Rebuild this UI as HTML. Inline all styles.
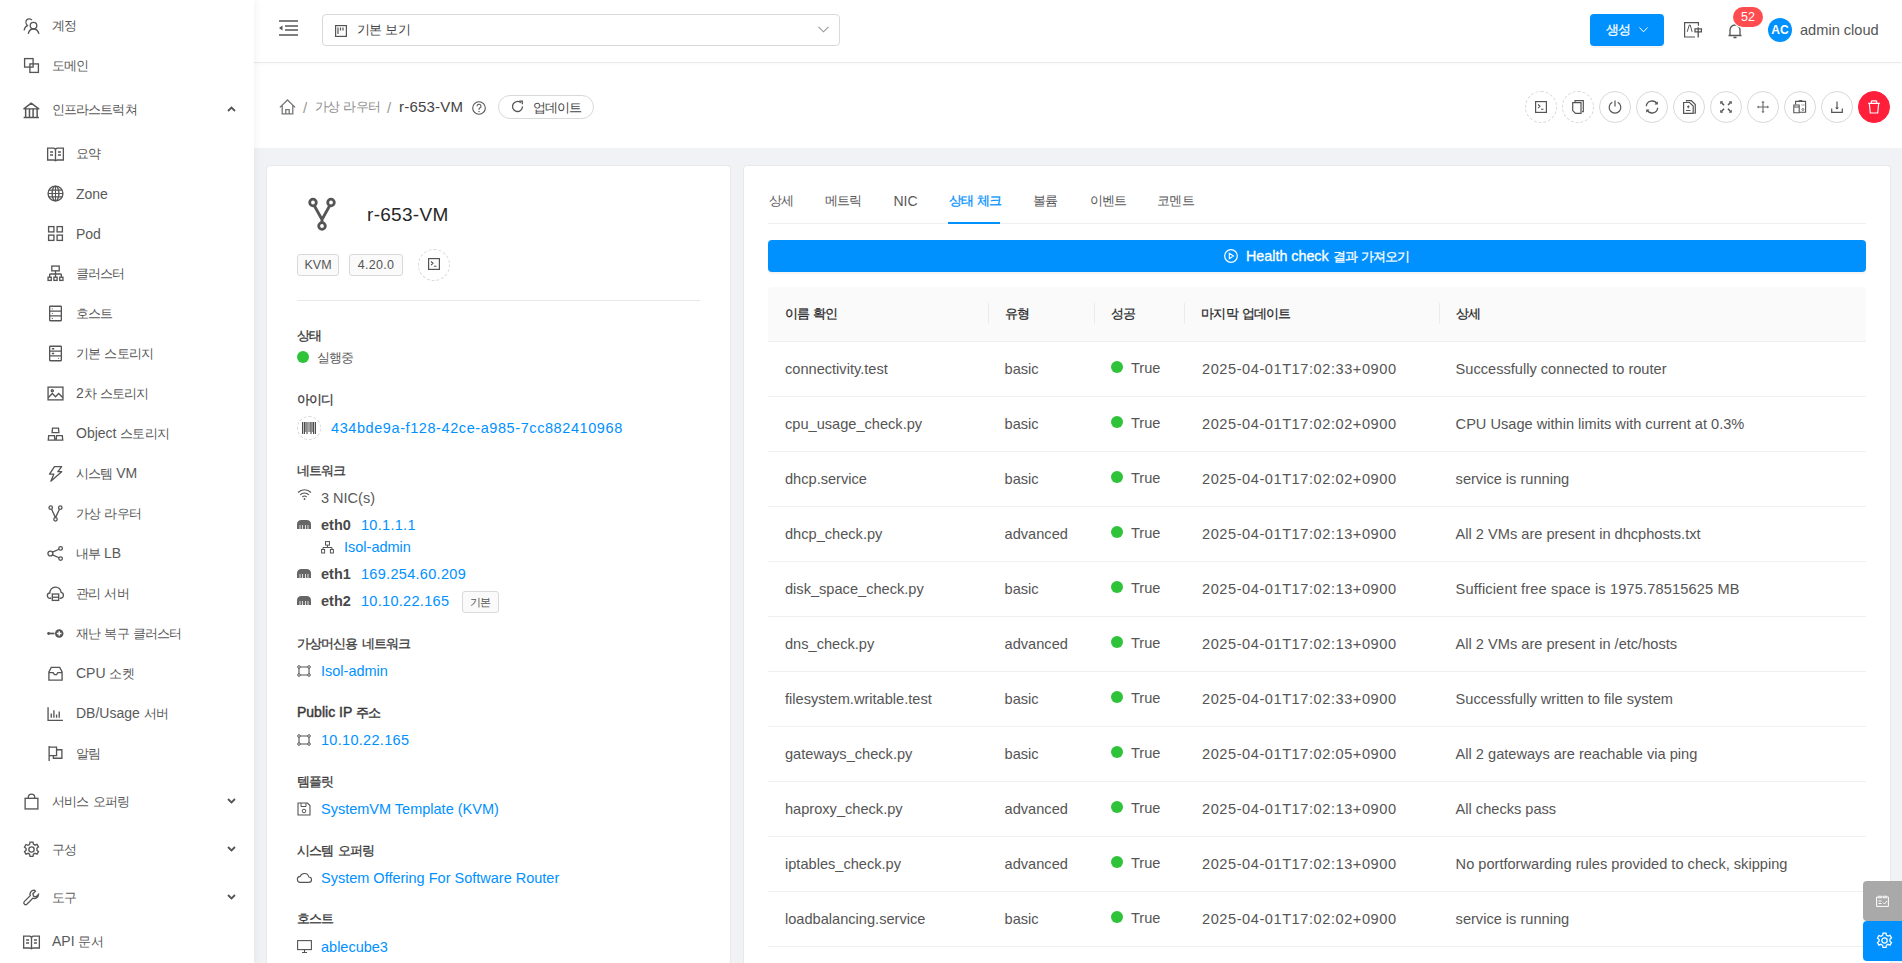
<!DOCTYPE html>
<html><head><meta charset="utf-8">
<style>
*{box-sizing:border-box;margin:0;padding:0}
html,body{width:1902px;height:963px;overflow:hidden}
body{font-family:"Liberation Sans",sans-serif;font-size:14px;color:#595959;background:#f0f2f5;position:relative}
.a{position:absolute;white-space:nowrap}
.k{font-size:.93em;letter-spacing:-.07em;word-spacing:.12em}
svg{position:absolute;overflow:visible}
#sider{position:absolute;left:0;top:0;width:254px;height:963px;background:#fff;z-index:2;box-shadow:2px 0 8px rgba(0,21,41,.05)}
#header{position:absolute;left:254px;top:0;width:1648px;height:62px;background:#fff;z-index:1;box-shadow:0 1px 3px rgba(0,21,41,.05)}
#crumb{position:absolute;left:254px;top:63px;width:1648px;height:85px;background:#fff}
.mi{color:#595959;font-size:14px;line-height:16px}
.ic{stroke:#555;stroke-width:1.25;fill:none}
.card{position:absolute;background:#fff;border:1px solid #e8e8e8;border-radius:4px}
.lbl{-webkit-text-stroke:.3px #3a3a3a;color:#3a3a3a;font-size:14px;line-height:16px}
.lnk{color:#0091ff;font-size:14.5px;line-height:16px}
.td{color:#555;font-size:14.6px;line-height:16px}
.th{font-weight:normal;-webkit-text-stroke:.25px #262626;color:#262626;font-size:14px;line-height:16px}
.cbtn{position:absolute;top:91px;width:32px;height:32px;border:1px solid #d9d9d9;border-radius:50%;background:#fff}
.dash{border-style:dashed}
.hl{position:absolute;left:768px;width:1098px;height:1px;background:#f0f0f0}
.sep{position:absolute;top:303px;width:1px;height:21px;background:#ececec}
.dot{position:absolute;width:12px;height:12px;border-radius:50%;background:#2fc33a}
</style></head><body>

<div id="sider">
<svg class="ic" style="left:22.5px;top:16.5px" width="17" height="17" viewBox="0 0 16 16" ><circle cx="9.9" cy="8.1" r="3.1"/><path d="M4.9 15.9c.6-2.7 2.6-4.6 5-4.6s4.4 1.9 5.1 4.6"/><path d="M8.4 2.9C7.3 1.5 5 1.2 3.6 2.6 2.3 4 2.6 6.5 4.2 8.1 2.7 8.6 1.5 10.2 1 12.7"/></svg>
<div class="a mi" style="left:52px;top:17px"><span class="k">계정</span></div>
<svg class="ic" style="left:22.5px;top:56.5px" width="17" height="17" viewBox="0 0 16 16" ><rect x="1.5" y="1.5" width="8" height="8"/><rect x="6.5" y="6.5" width="8" height="8"/></svg>
<div class="a mi" style="left:52px;top:57px"><span class="k">도메인</span></div>
<svg class="ic" style="left:22.5px;top:100.5px" width="17" height="17" viewBox="0 0 16 16" ><path d="M.8 7.4 7.7 2l7.2 5.4z" stroke-linejoin="round"/><path d="M2.5 7.4v8M6.1 7.4v8M9.5 7.4v8M13.3 7.4v8M.6 15.5h14.4" stroke-width="1.4"/></svg>
<div class="a mi" style="left:52px;top:101px"><span class="k">인프라스트럭쳐</span></div>
<svg class="ic" style="left:227px;top:106px" width="9" height="6" viewBox="0 0 9 6"><path d="M1 5 4.5 1.5 8 5" stroke-width="1.8"/></svg>
<svg class="ic" style="left:46.5px;top:144.5px" width="17" height="17" viewBox="0 0 16 16" ><path d="M.6 2.9h5.9L8 3.9l1.5-1h5.9v11.2H9.5L8 14.9l-1.5-.8H.6z"/><path d="M8 3.9v11M2.9 6.6h2.8M2.9 9.4h2.8M10.3 6.6h2.8M10.3 9.4h2.8"/></svg>
<div class="a mi" style="left:76px;top:145px"><span class="k">요약</span></div>
<svg class="ic" style="left:46.5px;top:184.5px" width="17" height="17" viewBox="0 0 16 16" ><circle cx="8" cy="8" r="7"/><ellipse cx="8" cy="8" rx="3.2" ry="7"/><path d="M1 8h14M2 4.8h12M2 11.2h12M8 1v14" stroke-width="1"/></svg>
<div class="a mi" style="left:76px;top:186px">Zone</div>
<svg class="ic" style="left:46.5px;top:224.5px" width="17" height="17" viewBox="0 0 16 16" ><rect x="1.5" y="1.5" width="5" height="5"/><rect x="9.5" y="1.5" width="5" height="5"/><rect x="1.5" y="9.5" width="5" height="5"/><rect x="9.5" y="9.5" width="5" height="5"/></svg>
<div class="a mi" style="left:76px;top:226px">Pod</div>
<svg class="ic" style="left:46.5px;top:264.5px" width="17" height="17" viewBox="0 0 16 16" ><rect x="4.5" y="1" width="7" height="4.5"/><path d="M8 5.5v3M2.5 8.5h11M2.5 8.5v3M8 8.5v3M13.5 8.5v3"/><rect x="1" y="11.5" width="3" height="3"/><rect x="6.5" y="11.5" width="3" height="3"/><rect x="12" y="11.5" width="3" height="3"/></svg>
<div class="a mi" style="left:76px;top:265px"><span class="k">클러스터</span></div>
<svg class="ic" style="left:46.5px;top:304.5px" width="17" height="17" viewBox="0 0 16 16" ><rect x="2.5" y="1.2" width="11" height="13.6" rx=".6"/><path d="M2.5 5.7h11M2.5 10.3h11"/><circle cx="5" cy="3.5" r=".55" style="fill:#555;stroke:none"/><circle cx="5" cy="8" r=".55" style="fill:#555;stroke:none"/><circle cx="5" cy="12.6" r=".55" style="fill:#555;stroke:none"/></svg>
<div class="a mi" style="left:76px;top:305px"><span class="k">호스트</span></div>
<svg class="ic" style="left:46.5px;top:344.5px" width="17" height="17" viewBox="0 0 16 16" ><rect x="2.5" y="1.2" width="11" height="13.6" rx=".6"/><path d="M2.5 5.7h11M2.5 10.3h11M4.6 3.5h2.2M4.6 8h2.2"/><circle cx="11" cy="12.6" r=".5" style="fill:#555;stroke:none"/></svg>
<div class="a mi" style="left:76px;top:345px"><span class="k">기본 스토리지</span></div>
<svg class="ic" style="left:46.5px;top:384.5px" width="17" height="17" viewBox="0 0 16 16" ><rect x="1" y="2" width="14" height="12"/><path d="M1 12l4-4 3 3 3-3 4 4"/><circle cx="5" cy="5.5" r="1"/></svg>
<div class="a mi" style="left:76px;top:385px">2<span class="k">차 스토리지</span></div>
<svg class="ic" style="left:46.5px;top:424.5px" width="17" height="17" viewBox="0 0 16 16" ><path d="M5.2 3h5.6l.4 4.2H4.8z"/><path d="M1.6 10h5.4l.4 4.2H1.2zM9 10h5.4l.4 4.2H8.6z"/></svg>
<div class="a mi" style="left:76px;top:425px">Object <span class="k">스토리지</span></div>
<svg class="ic" style="left:46.5px;top:464.5px" width="17" height="17" viewBox="0 0 16 16" ><path d="M7 1.5h6.8L10.2 6.3h3.6L3.6 15.2 6.4 8.6H2.4z" stroke-linejoin="round"/></svg>
<div class="a mi" style="left:76px;top:465px"><span class="k">시스템</span> VM</div>
<svg class="ic" style="left:46.5px;top:504.5px" width="17" height="17" viewBox="0 0 16 16" ><circle cx="3.5" cy="2.5" r="1.6"/><circle cx="12.5" cy="2.5" r="1.6"/><circle cx="8" cy="13.5" r="1.6"/><path d="M4.3 4 8 11.9M11.7 4 8 11.9"/></svg>
<div class="a mi" style="left:76px;top:505px"><span class="k">가상 라우터</span></div>
<svg class="ic" style="left:46.5px;top:544.5px" width="17" height="17" viewBox="0 0 16 16" ><circle cx="3.2" cy="8" r="2.3"/><circle cx="12.8" cy="3.2" r="1.7"/><circle cx="12.8" cy="12.8" r="1.7"/><path d="M5.2 6.8 11.3 4M5.2 9.2l6.1 2.8"/></svg>
<div class="a mi" style="left:76px;top:545px"><span class="k">내부</span> LB</div>
<svg class="ic" style="left:46.5px;top:584.5px" width="17" height="17" viewBox="0 0 16 16" ><path d="M4 12.5H3a2.5 2.5 0 0 1-.3-5A5.3 5.3 0 0 1 13.3 7a2.8 2.8 0 0 1-.3 5.5h-1"/><rect x="5" y="8.5" width="6" height="6"/><path d="M5 11.5h6"/></svg>
<div class="a mi" style="left:76px;top:585px"><span class="k">관리 서버</span></div>
<svg class="ic" style="left:46.5px;top:624.5px" width="17" height="17" viewBox="0 0 16 16" ><path d="M1 8h6" stroke-width="1.6"/><circle cx="11.5" cy="8" r="4" style="fill:#555;stroke:none"/><path d="M11.5 5.8v4.4M9.3 8h4.4" style="stroke:#fff;stroke-width:1.4"/><circle cx="1.5" cy="8" r="1.3" style="fill:#555;stroke:none"/></svg>
<div class="a mi" style="left:76px;top:625px"><span class="k">재난 복구 클러스터</span></div>
<svg class="ic" style="left:46.5px;top:664.5px" width="17" height="17" viewBox="0 0 16 16" ><path d="M1.8 14.3V6.5L4 2.2h8l2.2 4.3v7.8z"/><path d="M1.8 7.2h4l1.2 1.8h2l1.2-1.8h4"/></svg>
<div class="a mi" style="left:76px;top:665px">CPU <span class="k">소켓</span></div>
<svg class="ic" style="left:46.5px;top:704.5px" width="17" height="17" viewBox="0 0 16 16" ><path d="M1 2v12.5h14"/><path d="M4 12V8M6.5 12V5M9 12V9M11.5 12V6"/></svg>
<div class="a mi" style="left:76px;top:705px">DB/Usage <span class="k">서버</span></div>
<svg class="ic" style="left:46.5px;top:744.5px" width="17" height="17" viewBox="0 0 16 16" ><path d="M2 1v14M2 2h7v8H2M9 4.5h5v8H6V10"/></svg>
<div class="a mi" style="left:76px;top:745px"><span class="k">알림</span></div>
<svg class="ic" style="left:22.5px;top:792.5px" width="17" height="17" viewBox="0 0 16 16" ><rect x="2" y="5" width="12" height="10"/><path d="M5 5V4a3 3 0 0 1 6 0v1"/></svg>
<div class="a mi" style="left:52px;top:793px"><span class="k">서비스 오퍼링</span></div>
<svg class="ic" style="left:227px;top:798px" width="9" height="6" viewBox="0 0 9 6"><path d="M1 1 4.5 4.5 8 1" stroke-width="1.8"/></svg>
<svg class="ic" style="left:22.5px;top:840.5px" width="17" height="17" viewBox="0 0 16 16" ><circle cx="8" cy="8" r="2.5"/><path d="M6.6 1h2.8l.4 2 1.5.9 1.9-.8 1.4 2.4-1.5 1.3v1.9l1.5 1.3-1.4 2.4-1.9-.8-1.5.9-.4 2H6.6l-.4-2-1.5-.9-1.9.8-1.4-2.4 1.5-1.3V7L1.4 5.7l1.4-2.4 1.9.8 1.5-.9z"/></svg>
<div class="a mi" style="left:52px;top:841px"><span class="k">구성</span></div>
<svg class="ic" style="left:227px;top:846px" width="9" height="6" viewBox="0 0 9 6"><path d="M1 1 4.5 4.5 8 1" stroke-width="1.8"/></svg>
<svg class="ic" style="left:22.5px;top:888.5px" width="17" height="17" viewBox="0 0 16 16" ><path d="M10.5 1a4 4 0 0 0-3.7 5.3L1.2 11.9a1.7 1.7 0 0 0 2.4 2.4l5.6-5.6A4 4 0 0 0 14.6 5l-2.4 2.4-2.3-.6-.6-2.3L11.7 2A4 4 0 0 0 10.5 1z"/></svg>
<div class="a mi" style="left:52px;top:889px"><span class="k">도구</span></div>
<svg class="ic" style="left:227px;top:894px" width="9" height="6" viewBox="0 0 9 6"><path d="M1 1 4.5 4.5 8 1" stroke-width="1.8"/></svg>
<svg class="ic" style="left:22.5px;top:932.5px" width="17" height="17" viewBox="0 0 16 16" ><path d="M.6 2.9h5.9L8 3.9l1.5-1h5.9v11.2H9.5L8 14.9l-1.5-.8H.6z"/><path d="M8 3.9v11M2.9 6.6h2.8M2.9 9.4h2.8M10.3 6.6h2.8M10.3 9.4h2.8"/></svg>
<div class="a mi" style="left:52px;top:933px">API <span class="k">문서</span></div>
</div>
<div id="header">
 <svg style="left:25px;top:20px" width="19" height="16" viewBox="0 0 19 16"><path d="M0 1h19M6 6h13M6 10h13M0 15h19" stroke="#555" stroke-width="1.6"/><path d="M0 8 3.5 5.5v5z" fill="#555"/></svg>
 <div class="a" style="left:68px;top:14px;width:518px;height:32px;border:1px solid #d9d9d9;border-radius:4px;background:#fff"></div>
 <svg style="left:81px;top:25px" width="12" height="12" viewBox="0 0 12 12"><rect x=".6" y=".6" width="10.8" height="10.8" fill="none" stroke="#555" stroke-width="1.2"/><path d="M3 2.5v6.5M5.5 2.5v3M8 2.5v3" stroke="#555" stroke-width="1.2"/></svg>
 <div class="a mi" style="left:103px;top:21px;color:#444"><span class="k">기본 보기</span></div>
 <svg style="left:564px;top:26px" width="11" height="7" viewBox="0 0 11 7"><path d="M.5.8 5.5 5.8 10.5.8" fill="none" stroke="#999" stroke-width="1.1"/></svg>
 <div class="a" style="left:1336px;top:14px;width:74px;height:32px;border-radius:4px;background:#0091ff;box-shadow:0 2px 0 rgba(0,0,0,.045)"></div>
 <div class="a" style="left:1352px;top:21px;color:#fff;-webkit-text-stroke:.25px #fff;font-size:14px;line-height:16px"><span class="k">생성</span></div>
 <svg style="left:1385px;top:27px" width="9" height="6" viewBox="0 0 9 6"><path d="M.5.5 4.5 4.8 8.5.5" fill="none" stroke="#fff" stroke-width="1"/></svg>
 <svg style="left:1430px;top:22px" width="18" height="16" viewBox="0 0 18 16"><path d="M14.4 3.8V.6H.6v14.4h10.4" fill="none" stroke="#555" stroke-width="1.2"/><path d="M3.2 9.8 5.3 3h.9l1.9 6.8" fill="none" stroke="#555" stroke-width="1"/><path d="M11 6.9h6.4v3H11zM14.2 5.2v10.4" fill="none" stroke="#555" stroke-width="1.3"/></svg>
 <svg style="left:1474px;top:23px" width="14" height="16" viewBox="0 0 14 16"><path d="M2 12.5V7a5 5 0 0 1 10 0v5.5M.5 12.5h13M5.5 14.5h3" fill="none" stroke="#555" stroke-width="1.3"/></svg>
 <div class="a" style="left:1479px;top:7px;width:30px;height:20px;border-radius:10px;background:#ff4d4f;color:#fff;font-size:12.5px;line-height:20px;text-align:center;box-shadow:0 0 0 1px #fff">52</div>
 <div class="a" style="left:1514px;top:18px;width:24px;height:24px;border-radius:50%;background:#0091ff;color:#fff;font-size:12px;font-weight:bold;line-height:24px;text-align:center">AC</div>
 <div class="a" style="left:1546px;top:22px;color:#555;font-size:14.6px;line-height:16px">admin cloud</div>
</div>
<div id="crumb">
 <svg style="left:24.5px;top:35.5px" width="17" height="17" viewBox="0 0 17 17"><path d="M.9 8.4 8.5 1 16.1 8.4M3.2 6.6v8.3h10.6V6.6M6.8 14.9v-4.3h3.4v4.3" fill="none" stroke="#777" stroke-width="1.3"/></svg>
 <div class="a" style="left:49px;top:36px;color:#999;font-size:15px;line-height:17px">/</div>
 <div class="a" style="left:61px;top:35px;color:#8c8c8c;font-size:14px;line-height:16px"><span class="k">가상 라우터</span></div>
 <div class="a" style="left:133px;top:36px;color:#999;font-size:15px;line-height:17px">/</div>
 <div class="a" style="left:145px;top:36px;color:#444;font-size:15px;line-height:16px;letter-spacing:.2px">r-653-VM</div>
 <svg style="left:218px;top:38px" width="14" height="14" viewBox="0 0 14 14"><circle cx="7" cy="7" r="6.3" fill="none" stroke="#555" stroke-width="1.1"/><path d="M5 5.3a2 2 0 1 1 2.8 1.8c-.6.3-.8.6-.8 1.3v.4" fill="none" stroke="#555" stroke-width="1.1"/><circle cx="7" cy="10.5" r=".7" fill="#555"/></svg>
 <div class="a" style="left:244px;top:32px;width:96px;height:24px;border:1px solid #d9d9d9;border-radius:12px;background:#fff"></div>
 <svg style="left:257px;top:37px" width="13" height="13" viewBox="0 0 13 13"><path d="M11.5 6.5A5 5 0 1 1 9.8 2.7" fill="none" stroke="#555" stroke-width="1.3"/><path d="M8.3 1.2h3v3" fill="none" stroke="#555" stroke-width="1.3"/></svg>
 <div class="a" style="left:279px;top:35.5px;color:#444;font-size:14px;line-height:16px"><span class="k">업데이트</span></div>
</div>
<!-- action buttons -->
<div class="cbtn dash" style="left:1525px"></div>
<svg style="left:1535px;top:101px" width="12" height="12" viewBox="0 0 12 12"><rect x=".6" y=".6" width="10.8" height="10.8" fill="none" stroke="#555" stroke-width="1.2"/><path d="M3 3.5 5 5.3 3 7.1M6 8.2h2.5" fill="none" stroke="#555" stroke-width="1.1"/></svg>
<div class="cbtn dash" style="left:1562px"></div>
<svg style="left:1572px;top:100px" width="12" height="14" viewBox="0 0 12 14"><path d="M3 2V.6h8.3v11H10M.7 2.6h8.3v10.8H3.5L.7 10.6z" fill="none" stroke="#555" stroke-width="1.2"/></svg>
<div class="cbtn" style="left:1599px"></div>
<svg style="left:1608px;top:100px" width="14" height="14" viewBox="0 0 14 14"><path d="M4.3 2.2a5.8 5.8 0 1 0 5.4 0" fill="none" stroke="#555" stroke-width="1.2"/><path d="M7 .5v6" stroke="#555" stroke-width="1.2"/></svg>
<div class="cbtn" style="left:1636px"></div>
<svg style="left:1645px;top:100px" width="14" height="14" viewBox="0 0 14 14"><path d="M1.3 6.3A5.8 5.8 0 0 1 12 3.8M12.7 7.7A5.8 5.8 0 0 1 2 10.2" fill="none" stroke="#555" stroke-width="1.3"/><path d="M12.8 1.2v3.4H9.4zM1.2 12.8V9.4h3.4z" fill="#555"/></svg>
<div class="cbtn" style="left:1673px"></div>
<svg style="left:1683px;top:100px" width="13" height="14" viewBox="0 0 13 14"><path d="M3.5 1.5V.6h4.8l4 4v8.5h-1M.6 2.5h6l3.6 3.6v7.3H.6z" fill="none" stroke="#555" stroke-width="1.2"/><path d="M3 10.5h4.5M5.3 5.3v3M4 6.8h2.6" stroke="#555" stroke-width="1"/></svg>
<div class="cbtn" style="left:1710px"></div>
<svg style="left:1719px;top:100px" width="14" height="14" viewBox="0 0 14 14"><path d="M2.5 2.5 5 5.2M11.5 2.5 9 5M2.5 11.5 5 8.8M11.5 11.5 9 8.8" stroke="#555" stroke-width="1.5"/><path d="M1.2 1.2h3L1.2 4.2zM12.8 1.2h-3l3 3zM1.2 12.8h3l-3-3zM12.8 12.8h-3l3-3z" fill="#555"/></svg>
<div class="cbtn" style="left:1747px"></div>
<svg style="left:1757px;top:101px" width="12" height="12" viewBox="0 0 12 12"><path d="M6 1v10M1 6h10" stroke="#666" stroke-width="1.1"/><path d="M6 0 4.4 1.6h3.2zM6 12l-1.6-1.6h3.2zM0 6l1.6-1.6v3.2zM12 6l-1.6-1.6v3.2z" fill="#555"/></svg>
<div class="cbtn" style="left:1784px"></div>
<svg style="left:1793px;top:100px" width="14" height="14" viewBox="0 0 14 14"><path d="M2.6 4.6V1.4h10v10.8H6.3" fill="none" stroke="#555" stroke-width="1.1"/><path d="M6.2 1.4V.6h2.8v.8" fill="none" stroke="#555" stroke-width="1"/><path d="M.8 5h5.4v7.8H.8zM.8 7h5.4" fill="none" stroke="#555" stroke-width="1.1"/><path d="M9 4.5v1M10.8 4.5v1" stroke="#555" stroke-width=".9"/><circle cx="9.9" cy="9.5" r="1" fill="none" stroke="#555" stroke-width=".8"/></svg>
<div class="cbtn" style="left:1821px"></div>
<svg style="left:1831px;top:101px" width="12" height="12" viewBox="0 0 12 12"><path d="M6 .5v7.5M.7 7.5v3.8h10.6V7.5" fill="none" stroke="#555" stroke-width="1.2"/><path d="M4 6.4 6 8.6l2-2.2z" fill="#555"/></svg>
<div class="cbtn" style="left:1858px;background:#ff1f3a;border-color:#ff1f3a"></div>
<svg style="left:1868px;top:100px" width="12" height="14" viewBox="0 0 12 14"><path d="M.2 3.3h11.6M3.3 3.3V1.6q0-.8.8-.8h3.8q.8 0 .8.8v1.7M1.3 3.3l1 9.7h7.4l1-9.7" fill="none" stroke="#fff" stroke-width="1.15"/></svg>

<!-- left card -->
<div class="card" style="left:266px;top:165px;width:465px;height:820px"></div>
<svg style="left:308px;top:197px" width="28" height="34" viewBox="0 0 28 34"><circle cx="5" cy="5.5" r="3.3" fill="none" stroke="#555" stroke-width="2.8"/><circle cx="23" cy="5.5" r="3.3" fill="none" stroke="#555" stroke-width="2.8"/><circle cx="14" cy="29" r="3.3" fill="none" stroke="#555" stroke-width="2.8"/><path d="M6.5 9 14 22.5 21.5 9M14 22.5v3" fill="none" stroke="#555" stroke-width="2.8"/></svg>
<div class="a" style="left:367px;top:205px;color:#262626;font-size:19px;line-height:20px;letter-spacing:.3px">r-653-VM</div>
<div class="a" style="left:297px;top:254px;width:42px;height:22px;border:1px solid #d9d9d9;border-radius:3px;background:#fafafa;color:#555;font-size:12.5px;line-height:20px;text-align:center">KVM</div>
<div class="a" style="left:349px;top:254px;width:54px;height:22px;border:1px solid #d9d9d9;border-radius:3px;background:#fafafa;color:#555;font-size:12.5px;line-height:20px;text-align:center;letter-spacing:.3px">4.20.0</div>
<div class="a" style="left:418px;top:249px;width:32px;height:32px;border:1px dashed #d9d9d9;border-radius:50%"></div>
<svg style="left:428px;top:258px" width="12" height="12" viewBox="0 0 12 12"><rect x=".6" y=".6" width="10.8" height="10.8" fill="none" stroke="#555" stroke-width="1.2"/><path d="M3 3.5 5 5.3 3 7.1M6 8.2h2.5" fill="none" stroke="#555" stroke-width="1.1"/></svg>
<div class="a" style="left:297px;top:300px;width:403px;height:1px;background:#e8e8e8"></div>

<div class="a lbl" style="left:297px;top:327px"><span class="k">상태</span></div>
<div class="dot" style="left:297px;top:351px"></div>
<div class="a mi" style="left:317px;top:349px"><span class="k">실행중</span></div>

<div class="a lbl" style="left:297px;top:391px"><span class="k">아이디</span></div>
<div class="a" style="left:297px;top:416px;width:24px;height:24px;border:1px dashed #d9d9d9;border-radius:50%"></div>
<svg style="left:302px;top:422px" width="14" height="12" viewBox="0 0 14 12"><path d="M.6 0v12M2.4 0v12M5 0v12M9 0v12M11.6 0v12M13.4 0v12" stroke="#444" stroke-width="1.1"/><path d="M3.7 0v10M6.8 0v10M8 0v10M10.3 0v10" stroke="#444" stroke-width=".7"/></svg>
<div class="a lnk" style="left:331px;top:420px;letter-spacing:.58px">434bde9a-f128-42ce-a985-7cc882410968</div>

<div class="a lbl" style="left:297px;top:462px"><span class="k">네트워크</span></div>
<svg style="left:297px;top:489px" width="15" height="11" viewBox="0 0 15 11"><path d="M1 3.5a9 9 0 0 1 13 0M3.2 5.8a6 6 0 0 1 8.6 0M5.4 8a3 3 0 0 1 4.2 0" fill="none" stroke="#555" stroke-width="1.1"/><circle cx="7.5" cy="10" r=".9" fill="#555"/></svg>
<div class="a mi" style="left:321px;top:490px;font-size:14.5px">3 NIC(s)</div>

<svg style="left:297px;top:519px" width="14" height="10" viewBox="0 0 14 10"><path d="M0 10V5.5Q0 1 4.5 1h5Q14 1 14 5.5V10z" fill="#666"/><path d="M3 6v4M5.5 6v4M8.5 6v4M11 6v4" stroke="#fff" stroke-width=".8"/></svg>
<div class="a" style="left:321px;top:517px;font-weight:bold;color:#4a4a4a;font-size:14.5px;line-height:16px">eth0</div>
<div class="a lnk" style="left:361px;top:517px;letter-spacing:.3px">10.1.1.1</div>
<svg style="left:321px;top:541px" width="13" height="13" viewBox="0 0 13 13"><rect x="4.5" y=".6" width="4" height="3.5" fill="none" stroke="#555"/><path d="M6.5 4.1V6.5M2 6.5h9M2 6.5v2M11 6.5v2" fill="none" stroke="#555"/><rect x=".6" y="8.5" width="3" height="3.5" fill="none" stroke="#555"/><rect x="9.4" y="8.5" width="3" height="3.5" fill="none" stroke="#555"/></svg>
<div class="a lnk" style="left:344px;top:539px">Isol-admin</div>

<svg style="left:297px;top:568px" width="14" height="10" viewBox="0 0 14 10"><path d="M0 10V5.5Q0 1 4.5 1h5Q14 1 14 5.5V10z" fill="#666"/><path d="M3 6v4M5.5 6v4M8.5 6v4M11 6v4" stroke="#fff" stroke-width=".8"/></svg>
<div class="a" style="left:321px;top:566px;font-weight:bold;color:#4a4a4a;font-size:14.5px;line-height:16px">eth1</div>
<div class="a lnk" style="left:361px;top:566px;letter-spacing:.3px">169.254.60.209</div>

<svg style="left:297px;top:595px" width="14" height="10" viewBox="0 0 14 10"><path d="M0 10V5.5Q0 1 4.5 1h5Q14 1 14 5.5V10z" fill="#666"/><path d="M3 6v4M5.5 6v4M8.5 6v4M11 6v4" stroke="#fff" stroke-width=".8"/></svg>
<div class="a" style="left:321px;top:593px;font-weight:bold;color:#4a4a4a;font-size:14.5px;line-height:16px">eth2</div>
<div class="a lnk" style="left:361px;top:593px;letter-spacing:.3px">10.10.22.165</div>
<div class="a" style="left:462px;top:591px;width:37px;height:22px;border:1px solid #d9d9d9;border-radius:3px;background:#fafafa;color:#555;font-size:12px;line-height:20px;text-align:center"><span class="k">기본</span></div>

<div class="a lbl" style="left:297px;top:635px"><span class="k">가상머신용 네트워크</span></div>
<svg style="left:297px;top:665px" width="14" height="12" viewBox="0 0 14 12"><path d="M2 2h10M2 10h10M2 2v8M12 2v8" fill="none" stroke="#555" stroke-width="1.1"/><circle cx="2" cy="2" r="1.3" fill="#fff" stroke="#555"/><circle cx="12" cy="2" r="1.3" fill="#fff" stroke="#555"/><circle cx="2" cy="10" r="1.3" fill="#fff" stroke="#555"/><circle cx="12" cy="10" r="1.3" fill="#fff" stroke="#555"/></svg>
<div class="a lnk" style="left:321px;top:663px">Isol-admin</div>

<div class="a lbl" style="left:297px;top:704px;-webkit-text-stroke:.45px #3a3a3a">Public IP <span class="k">주소</span></div>
<svg style="left:297px;top:734px" width="14" height="12" viewBox="0 0 14 12"><path d="M2 2h10M2 10h10M2 2v8M12 2v8" fill="none" stroke="#555" stroke-width="1.1"/><circle cx="2" cy="2" r="1.3" fill="#fff" stroke="#555"/><circle cx="12" cy="2" r="1.3" fill="#fff" stroke="#555"/><circle cx="2" cy="10" r="1.3" fill="#fff" stroke="#555"/><circle cx="12" cy="10" r="1.3" fill="#fff" stroke="#555"/></svg>
<div class="a lnk" style="left:321px;top:732px;letter-spacing:.3px">10.10.22.165</div>

<div class="a lbl" style="left:297px;top:773px"><span class="k">템플릿</span></div>
<svg style="left:297px;top:802px" width="14" height="14" viewBox="0 0 14 14"><path d="M1 1h9.5L13 3.5V13H1z" fill="none" stroke="#555" stroke-width="1.1"/><path d="M4 1v3.5h5V1" fill="none" stroke="#555"/><circle cx="7" cy="9" r="1.8" fill="none" stroke="#555"/></svg>
<div class="a lnk" style="left:321px;top:801px">SystemVM Template (KVM)</div>

<div class="a lbl" style="left:297px;top:842px"><span class="k">시스템 오퍼링</span></div>
<svg style="left:297px;top:872px" width="15" height="11" viewBox="0 0 15 11"><path d="M4 10.4H3.5a3 3 0 0 1-.3-6 4.5 4.5 0 0 1 8.6.6 2.7 2.7 0 0 1 0 5.4z" fill="none" stroke="#555" stroke-width="1.1"/></svg>
<div class="a lnk" style="left:321px;top:870px">System Offering For Software Router</div>

<div class="a lbl" style="left:297px;top:910px"><span class="k">호스트</span></div>
<svg style="left:297px;top:940px" width="15" height="13" viewBox="0 0 15 13"><rect x=".6" y=".6" width="13.8" height="9" fill="none" stroke="#555" stroke-width="1.1"/><path d="M5 12.5h5M7.5 9.6v2.9" stroke="#555" stroke-width="1.1"/></svg>
<div class="a lnk" style="left:321px;top:939px">ablecube3</div>

<!-- right card -->
<div class="card" style="left:743px;top:165px;width:1148px;height:820px"></div>
<div class="a" style="left:768.6px;top:192px;color:#595959;font-size:14px;line-height:16px"><span class="k">상세</span></div>
<div class="a" style="left:824.8px;top:192px;color:#595959;font-size:14px;line-height:16px"><span class="k">메트릭</span></div>
<div class="a" style="left:893.5px;top:193px;color:#595959;font-size:14px;line-height:16px">NIC</div>
<div class="a" style="left:948.5px;top:192px;color:#0091ff;-webkit-text-stroke:.25px #0091ff;font-size:14px;line-height:16px"><span class="k">상태 체크</span></div>
<div class="a" style="left:1033.0px;top:192px;color:#595959;font-size:14px;line-height:16px"><span class="k">볼륨</span></div>
<div class="a" style="left:1089.6px;top:192px;color:#595959;font-size:14px;line-height:16px"><span class="k">이벤트</span></div>
<div class="a" style="left:1157.4px;top:192px;color:#595959;font-size:14px;line-height:16px"><span class="k">코멘트</span></div>
<div class="hl" style="top:223px"></div>
<div class="a" style="left:948px;top:222px;width:52px;height:2px;background:#0091ff"></div>
<div class="a" style="left:768px;top:240px;width:1098px;height:32px;border-radius:4px;background:#0091ff;box-shadow:0 2px 0 rgba(0,0,0,.045)"></div>
<svg style="left:1224px;top:249px" width="14" height="14" viewBox="0 0 14 14"><circle cx="7" cy="7" r="6.3" fill="none" stroke="#fff" stroke-width="1.2"/><path d="M5.3 4.3v5.4L9.5 7z" fill="none" stroke="#fff" stroke-width="1.1"/></svg>
<div class="a" style="left:1246px;top:248px;color:#fff;-webkit-text-stroke:.3px #fff;font-size:14.3px;line-height:16px">Health check <span class="k">결과 가져오기</span></div>
<div class="a" style="left:768px;top:287px;width:1098px;height:54px;background:#fafafa;border-radius:4px 4px 0 0"></div>
<div class="hl" style="top:341px;background:#efefef"></div>
<div class="sep" style="left:988px"></div>
<div class="sep" style="left:1094px"></div>
<div class="sep" style="left:1184px"></div>
<div class="sep" style="left:1439px"></div>
<div class="a th" style="left:784.8px;top:305px"><span class="k">이름 확인</span></div>
<div class="a th" style="left:1004.6px;top:305px"><span class="k">유형</span></div>
<div class="a th" style="left:1111.0px;top:305px"><span class="k">성공</span></div>
<div class="a th" style="left:1201.4px;top:305px"><span class="k">마지막 업데이트</span></div>
<div class="a th" style="left:1455.6px;top:305px"><span class="k">상세</span></div>
<div class="a td" style="left:785px;top:360.5px">connectivity.test</div>
<div class="a td" style="left:1004.6px;top:360.5px">basic</div>
<div class="dot" style="left:1111px;top:361.0px"></div>
<div class="a td" style="left:1131px;top:359.5px">True</div>
<div class="a td" style="left:1202px;top:360.5px;letter-spacing:.55px">2025-04-01T17:02:33+0900</div>
<div class="a td" style="left:1455.6px;top:360.5px;letter-spacing:0px">Successfully connected to router</div>
<div class="hl" style="top:396px"></div>
<div class="a td" style="left:785px;top:415.5px">cpu_usage_check.py</div>
<div class="a td" style="left:1004.6px;top:415.5px">basic</div>
<div class="dot" style="left:1111px;top:416.0px"></div>
<div class="a td" style="left:1131px;top:414.5px">True</div>
<div class="a td" style="left:1202px;top:415.5px;letter-spacing:.55px">2025-04-01T17:02:02+0900</div>
<div class="a td" style="left:1455.6px;top:415.5px;letter-spacing:0px">CPU Usage within limits with current at 0.3%</div>
<div class="hl" style="top:451px"></div>
<div class="a td" style="left:785px;top:470.5px">dhcp.service</div>
<div class="a td" style="left:1004.6px;top:470.5px">basic</div>
<div class="dot" style="left:1111px;top:471.0px"></div>
<div class="a td" style="left:1131px;top:469.5px">True</div>
<div class="a td" style="left:1202px;top:470.5px;letter-spacing:.55px">2025-04-01T17:02:02+0900</div>
<div class="a td" style="left:1455.6px;top:470.5px;letter-spacing:0px">service is running</div>
<div class="hl" style="top:506px"></div>
<div class="a td" style="left:785px;top:525.5px">dhcp_check.py</div>
<div class="a td" style="left:1004.6px;top:525.5px">advanced</div>
<div class="dot" style="left:1111px;top:526.0px"></div>
<div class="a td" style="left:1131px;top:524.5px">True</div>
<div class="a td" style="left:1202px;top:525.5px;letter-spacing:.55px">2025-04-01T17:02:13+0900</div>
<div class="a td" style="left:1455.6px;top:525.5px;letter-spacing:0px">All 2 VMs are present in dhcphosts.txt</div>
<div class="hl" style="top:561px"></div>
<div class="a td" style="left:785px;top:580.5px">disk_space_check.py</div>
<div class="a td" style="left:1004.6px;top:580.5px">basic</div>
<div class="dot" style="left:1111px;top:581.0px"></div>
<div class="a td" style="left:1131px;top:579.5px">True</div>
<div class="a td" style="left:1202px;top:580.5px;letter-spacing:.55px">2025-04-01T17:02:13+0900</div>
<div class="a td" style="left:1455.6px;top:580.5px;letter-spacing:.15px">Sufficient free space is 1975.78515625 MB</div>
<div class="hl" style="top:616px"></div>
<div class="a td" style="left:785px;top:635.5px">dns_check.py</div>
<div class="a td" style="left:1004.6px;top:635.5px">advanced</div>
<div class="dot" style="left:1111px;top:636.0px"></div>
<div class="a td" style="left:1131px;top:634.5px">True</div>
<div class="a td" style="left:1202px;top:635.5px;letter-spacing:.55px">2025-04-01T17:02:13+0900</div>
<div class="a td" style="left:1455.6px;top:635.5px;letter-spacing:0px">All 2 VMs are present in /etc/hosts</div>
<div class="hl" style="top:671px"></div>
<div class="a td" style="left:785px;top:690.5px">filesystem.writable.test</div>
<div class="a td" style="left:1004.6px;top:690.5px">basic</div>
<div class="dot" style="left:1111px;top:691.0px"></div>
<div class="a td" style="left:1131px;top:689.5px">True</div>
<div class="a td" style="left:1202px;top:690.5px;letter-spacing:.55px">2025-04-01T17:02:33+0900</div>
<div class="a td" style="left:1455.6px;top:690.5px;letter-spacing:0px">Successfully written to file system</div>
<div class="hl" style="top:726px"></div>
<div class="a td" style="left:785px;top:745.5px">gateways_check.py</div>
<div class="a td" style="left:1004.6px;top:745.5px">basic</div>
<div class="dot" style="left:1111px;top:746.0px"></div>
<div class="a td" style="left:1131px;top:744.5px">True</div>
<div class="a td" style="left:1202px;top:745.5px;letter-spacing:.55px">2025-04-01T17:02:05+0900</div>
<div class="a td" style="left:1455.6px;top:745.5px;letter-spacing:0px">All 2 gateways are reachable via ping</div>
<div class="hl" style="top:781px"></div>
<div class="a td" style="left:785px;top:800.5px">haproxy_check.py</div>
<div class="a td" style="left:1004.6px;top:800.5px">advanced</div>
<div class="dot" style="left:1111px;top:801.0px"></div>
<div class="a td" style="left:1131px;top:799.5px">True</div>
<div class="a td" style="left:1202px;top:800.5px;letter-spacing:.55px">2025-04-01T17:02:13+0900</div>
<div class="a td" style="left:1455.6px;top:800.5px;letter-spacing:0px">All checks pass</div>
<div class="hl" style="top:836px"></div>
<div class="a td" style="left:785px;top:855.5px">iptables_check.py</div>
<div class="a td" style="left:1004.6px;top:855.5px">advanced</div>
<div class="dot" style="left:1111px;top:856.0px"></div>
<div class="a td" style="left:1131px;top:854.5px">True</div>
<div class="a td" style="left:1202px;top:855.5px;letter-spacing:.55px">2025-04-01T17:02:13+0900</div>
<div class="a td" style="left:1455.6px;top:855.5px;letter-spacing:0px">No portforwarding rules provided to check, skipping</div>
<div class="hl" style="top:891px"></div>
<div class="a td" style="left:785px;top:910.5px">loadbalancing.service</div>
<div class="a td" style="left:1004.6px;top:910.5px">basic</div>
<div class="dot" style="left:1111px;top:911.0px"></div>
<div class="a td" style="left:1131px;top:909.5px">True</div>
<div class="a td" style="left:1202px;top:910.5px;letter-spacing:.55px">2025-04-01T17:02:02+0900</div>
<div class="a td" style="left:1455.6px;top:910.5px;letter-spacing:0px">service is running</div>
<div class="hl" style="top:946px"></div>
<div class="a" style="left:1863px;top:881px;width:39px;height:40px;background:#a9a9a9;border-radius:4px 0 0 4px"></div>
<svg style="left:1876px;top:895px" width="13" height="12" viewBox="0 0 13 12"><path d="M.6 2h11.8v9.4H.6zM3 .5v3M5 .5v3M8 .5v3M10 .5v3M2.5 6h3M2.5 8.5h3M7 7.5l1.5 1.5 2.5-3" fill="none" stroke="#fff" stroke-width="1"/></svg>
<div class="a" style="left:1863px;top:921px;width:39px;height:40px;background:#0091ff;border-radius:4px 0 0 4px"></div>
<svg style="left:1875.5px;top:931.5px" width="17" height="17" viewBox="0 0 16 16"><circle cx="8" cy="8" r="2.5" fill="none" stroke="#fff" stroke-width="1.2"/><path d="M6.6 1h2.8l.4 2 1.5.9 1.9-.8 1.4 2.4-1.5 1.3v1.9l1.5 1.3-1.4 2.4-1.9-.8-1.5.9-.4 2H6.6l-.4-2-1.5-.9-1.9.8-1.4-2.4 1.5-1.3V7L1.4 5.7l1.4-2.4 1.9.8 1.5-.9z" fill="none" stroke="#fff" stroke-width="1.2"/></svg>
</body></html>
